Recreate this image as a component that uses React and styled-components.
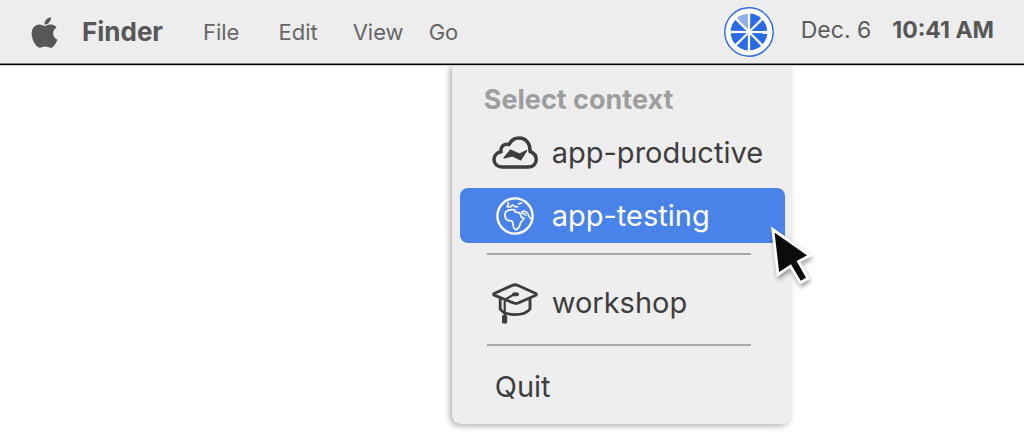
import React from "react";
import styled, { createGlobalStyle } from "styled-components";
import { FaApple } from "react-icons/fa";

const GlobalStyle = createGlobalStyle`
  * { box-sizing: border-box; }
  body {
    margin: 0;
    background: #fff;
    font-family: Inter, "Liberation Sans", sans-serif;
  }
`;

const Page = styled.div`
  min-height: 100vh;
`;

const MenuBar = styled.header`
  display: flex;
  align-items: center;
  justify-content: space-between;
  height: 65px;
  padding: 0 30px 0 27px;
  background: #ededed;
  border-bottom: 1px solid #000;
  box-shadow: inset 0 -1px 0 #808080, 0 1px 0 #d6d6d6;
`;

const AppMenus = styled.nav`
  display: flex;
  align-items: center;
`;

const BarButton = styled.button`
  display: flex;
  align-items: center;
  margin: 0 ${(p) => p.$gap || 0}px 0 0;
  padding: 0;
  border: 0;
  background: none;
  color: ${(p) => (p.$strong ? "#575757" : "#666")};
  font: ${(p) => (p.$strong ? "700 26px" : "400 22px")} / 32px Inter, "Liberation Sans", sans-serif;
  white-space: nowrap;
`;

const StatusArea = styled.div`
  display: flex;
  align-items: center;
`;

const StatusItem = styled.div`
  position: relative;
  display: flex;
  margin-right: 27px;
`;

const DateText = styled.span`
  margin: 0 21px 5px 0;
  color: #5c5c5c;
  font-size: 23px;
  line-height: 28px;
  white-space: nowrap;
`;

const TimeText = styled(DateText)`
  margin-right: 0;
  color: #575757;
  font-weight: 700;
`;

const Menu = styled.div`
  position: absolute;
  top: 58px;
  right: -17px;
  width: 339px;
  padding: 18px 6px 10px 8px;
  border-radius: 0 0 9px 9px;
  background: #eee;
  box-shadow: -2px 2px 6px rgba(0, 0, 0, 0.32);
  clip-path: inset(1px -32px -16px -16px);
`;

const MenuTitle = styled.h2`
  margin: 0 0 8px;
  padding-left: 24px;
  color: #9e9e9e;
  font-size: 27px;
  font-weight: 700;
  line-height: 34px;
  white-space: nowrap;
`;

const MenuItem = styled.button`
  display: flex;
  align-items: center;
  width: 100%;
  height: 55px;
  margin: 0 0 ${(p) => p.$gap || 0}px;
  padding: 0 0 0 ${(p) => (p.$plain ? 35 : 32)}px;
  border: 0;
  border-radius: 8px;
  background: ${(p) => (p.$active ? "#4983e9" : "transparent")};
  color: ${(p) => (p.$active ? "#fff" : "#3d3d3d")};
  font: 400 29px / 36px Inter, "Liberation Sans", sans-serif;
  white-space: nowrap;
`;

const IconSlot = styled.span`
  display: flex;
  flex: none;
  justify-content: center;
  width: 46px;
  margin-right: 14px;
`;

const Divider = styled.hr`
  height: 2px;
  margin: ${(p) => p.$before}px 34px ${(p) => p.$after}px 27px;
  border: 0;
  background: #a8a8a8;
`;

const Pointer = styled.svg`
  position: absolute;
  top: 159px;
  right: -21px;
  overflow: visible;
  pointer-events: none;
  filter: drop-shadow(1px 3px 2px rgba(0, 0, 0, 0.35));
`;

function CitrusIcon() {
  return (
    <svg width="50" height="50" viewBox="0 0 50 50" aria-hidden="true">
      <circle cx="25" cy="25" r="24.2" fill="#fff" stroke="#2c6be3" strokeWidth="1.4" />
      {[0, 45, 90, 135, 180, 225, 270, 315].map((angle) => (
        <path
          key={angle}
          d="M26 22.500 L26.300 6.600 A18.400 18.400 0 0 1 37.100 11.300 Z"
          fill={angle === 315 ? "#8fb0ec" : "#2a6be6"}
          transform={`rotate(${angle} 25 25)`}
        />
      ))}
    </svg>
  );
}

function CloudIcon() {
  return (
    <svg width="46" height="33" viewBox="0 0 46 33" aria-hidden="true">
      <path
        d="M10.500 31 C5.500 31 2 28 2 23.500 C2 19.500 5 16.500 9 15.800 C8.200 10.500 12 7.300 17 8.600 C19 4.500 22.500 2 27 2 C33.500 2 38.500 7 38 15.500 C42 17 44.200 20 44.200 23.500 C44.200 28 41 31 36 31 Z"
        fill="none"
        stroke="#3d3d3d"
        strokeWidth="3.5"
        strokeLinejoin="round"
      />
      <path
        d="M12 22 L18.500 14 L27.500 18 L34.800 14.500 L28.700 24 L20.500 20 Z"
        fill="#3d3d3d"
        stroke="#3d3d3d"
        strokeWidth="1.2"
        strokeLinejoin="round"
      />
    </svg>
  );
}

function GlobeIcon() {
  return (
    <svg
      width="38"
      height="38"
      viewBox="0 0 38 38"
      fill="none"
      stroke="#fff"
      strokeWidth="1.7"
      strokeLinecap="round"
      strokeLinejoin="round"
      aria-hidden="true"
    >
      <circle cx="19" cy="19" r="17.6" strokeWidth="2.4" />
      <path d="M9 18 Q8.800 15 11.500 13.500 Q15 12.200 18.500 12.800 L19.200 15 L23.800 15.800 L25.300 20 L28 21.300 L24.500 26 Q23.300 31.800 19.800 32.600 Q17.500 32.300 16.900 26.500 Q16.800 24 15 23.800 L11.500 23.300 Q9 21.800 9 18 Z" />
      <path d="M34.500 21.500 Q33 20 32 17 Q30.500 14.300 27.500 14 Q25.500 14.500 26 16.200 Q29 16.500 30 18.500" strokeWidth="1.5" />
      <path d="M12 5.500 L12.600 7.500 L11 9.800 L14.500 9.900 L16.500 8 L19.500 9.900 L21.800 9.600" strokeWidth="1.5" />
      <path d="M22.500 6.800 L25.500 6" />
    </svg>
  );
}

function CapIcon() {
  return (
    <svg
      width="46"
      height="42"
      viewBox="0 0 46 42"
      fill="none"
      stroke="#3d3d3d"
      strokeWidth="2.9"
      strokeLinecap="round"
      strokeLinejoin="round"
      aria-hidden="true"
    >
      <path d="M2.200 11.500 L20.500 3.300 Q23 2.300 25.500 3.300 L43.800 11.500 Q45 12.400 43.800 13.200 L26.800 20.800 Q24 22.100 21.200 20.800 L2.200 13.200 Q1 12.400 2.200 11.500 Z" />
      <path d="M8.200 16.500 V27 Q12 32.600 23 32.600 Q34 32.600 38 27 V16.500" />
      <path d="M22 12.500 L14.500 16.700 Q12.700 17.700 12.700 20 V34" strokeWidth="2.2" />
      <ellipse cx="23.500" cy="12.300" rx="3.500" ry="2" fill="#3d3d3d" stroke="none" />
      <rect x="10" y="33" width="5.200" height="8.500" rx="1.500" fill="#3d3d3d" stroke="none" />
    </svg>
  );
}

export default function App() {
  return (
    <Page>
      <GlobalStyle />
      <MenuBar>
        <AppMenus aria-label="Application">
          <BarButton $gap={20} aria-label="Apple menu" $strong>
            <FaApple size={35} />
          </BarButton>
          <BarButton $gap={40} $strong>Finder</BarButton>
          <BarButton $gap={39}>File</BarButton>
          <BarButton $gap={35}>Edit</BarButton>
          <BarButton $gap={25}>View</BarButton>
          <BarButton>Go</BarButton>
        </AppMenus>
        <StatusArea>
          <StatusItem>
            <BarButton aria-label="Contexts" aria-expanded="true">
              <CitrusIcon />
            </BarButton>
            <Menu>
              <MenuTitle>Select context</MenuTitle>
              <MenuItem $gap={8}>
                <IconSlot><CloudIcon /></IconSlot>
                app-productive
              </MenuItem>
              <MenuItem $active>
                <IconSlot><GlobeIcon /></IconSlot>
                app-testing
              </MenuItem>
              <Divider $before={10} $after={20} />
              <MenuItem>
                <IconSlot><CapIcon /></IconSlot>
                workshop
              </MenuItem>
              <Divider $before={14} $after={13} />
              <MenuItem $plain>Quit</MenuItem>
              <Pointer width="44" height="62" viewBox="0 0 44 62" aria-hidden="true">
                <path
                  d="M4.800 5.500 L41.800 31.500 L30.500 37.500 L40 54.200 L32.300 58.800 L22.500 42.200 L10 50.500 Z"
                  fill="#0c0c0c"
                  stroke="#fff"
                  strokeWidth="2.8"
                />
              </Pointer>
            </Menu>
          </StatusItem>
          <DateText>Dec. 6</DateText>
          <TimeText>10:41 AM</TimeText>
        </StatusArea>
      </MenuBar>
    </Page>
  );
}
